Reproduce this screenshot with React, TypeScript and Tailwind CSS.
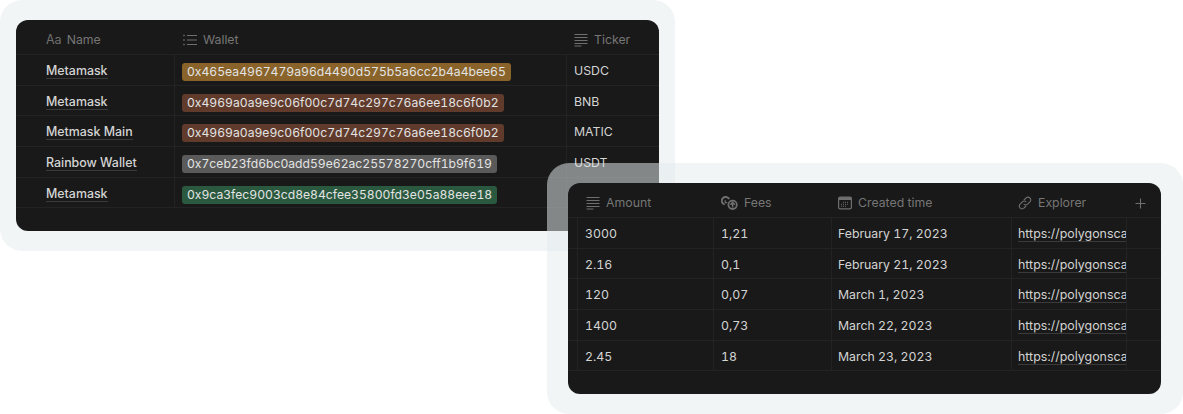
import { ReactNode } from "react";

function ListIcon() {
  return (
    <svg width="14" height="14" viewBox="0 0 14 14" fill="none" stroke="currentColor" strokeWidth="1.1">
      <path d="M4 2.5h10M4 7h10M4 11.5h10" />
      <path d="M0.3 2.5h1.4M0.3 7h1.4M0.3 11.5h1.4" strokeWidth="1.3" />
    </svg>
  );
}

function TextIcon() {
  return (
    <svg width="14" height="14" viewBox="0 0 14 14" fill="none" stroke="currentColor" strokeWidth="1.1">
      <path d="M0.5 1.5h13M0.5 4.5h13M0.5 7.5h13M0.5 10.5h13M0.5 13h7" />
    </svg>
  );
}

function FeesIcon() {
  return (
    <svg width="17" height="14" viewBox="0 0 17 14" fill="none" stroke="currentColor">
      <path d="M8.2 3.2A3.9 3.9 0 1 0 3.6 8.6" strokeWidth="2" />
      <path d="M4.2 4.2v2.4h2" strokeWidth="1.2" />
      <circle cx="11.6" cy="8.8" r="4.2" strokeWidth="1.8" />
      <path d="M11.6 11.6V6.6M9.4 8.8l2.2-2.4 2.2 2.4" strokeWidth="1.5" />
    </svg>
  );
}

function CalendarIcon() {
  return (
    <svg width="14" height="14" viewBox="0 0 14 14" fill="none">
      <rect x="0.6" y="1.2" width="12.8" height="11.6" rx="1.6" stroke="currentColor" strokeWidth="1.2" />
      <rect x="0.6" y="1.2" width="12.8" height="2.8" fill="currentColor" />
      <path d="M5 6.2h6M3 8.2h8M3 10.2h5" stroke="currentColor" strokeWidth="1.1" strokeDasharray="1 1" />
    </svg>
  );
}

function LinkIcon() {
  return (
    <svg width="14" height="14" viewBox="0 0 14 14" fill="none" stroke="currentColor" strokeWidth="1.1">
      <path d="M5.8 4.2 8 2a2.6 2.6 0 0 1 3.9 0 2.6 2.6 0 0 1 0 3.8L9.6 8.1a2.6 2.6 0 0 1-3.8 0" />
      <path d="M8.2 9.8 6 12a2.6 2.6 0 0 1-3.9 0 2.6 2.6 0 0 1 0-3.8l2.3-2.3a2.6 2.6 0 0 1 3.8 0" />
    </svg>
  );
}

function HeaderCell({ icon, label }: { icon: ReactNode; label: string }) {
  return (
    <div className="flex items-center gap-[6px] text-[#6f6f6f]">
      {icon}
      <span className="text-[12.3px] text-[#767676]">{label}</span>
    </div>
  );
}

function Linked({ children, medium }: { children: ReactNode; medium?: boolean }) {
  return (
    <span
      className={`border-b border-[#3a3a3a] leading-[15px] text-[#d4d4d4] normal-nums ${
        medium ? "text-[12.4px] font-medium" : "text-[12.4px]"
      }`}
    >
      {children}
    </span>
  );
}

const wallets = [
  { name: "Metamask", address: "0x465ea4967479a96d4490d575b5a6cc2b4a4bee65", color: "bg-[#89632a]", ticker: "USDC" },
  { name: "Metamask", address: "0x4969a0a9e9c06f00c7d74c297c76a6ee18c6f0b2", color: "bg-[#603b2c]", ticker: "BNB" },
  { name: "Metmask Main", address: "0x4969a0a9e9c06f00c7d74c297c76a6ee18c6f0b2", color: "bg-[#603b2c]", ticker: "MATIC" },
  { name: "Rainbow Wallet", address: "0x7ceb23fd6bc0add59e62ac25578270cff1b9f619", color: "bg-[#5a5a5a]", ticker: "USDT" },
  { name: "Metamask", address: "0x9ca3fec9003cd8e84cfee35800fd3e05a88eee18", color: "bg-[#2b593f]", ticker: "" },
];

const payments = [
  { amount: "3000", fees: "1,21", created: "February 17, 2023" },
  { amount: "2.16", fees: "0,1", created: "February 21, 2023" },
  { amount: "120", fees: "0,07", created: "March 1, 2023" },
  { amount: "1400", fees: "0,73", created: "March 22, 2023" },
  { amount: "2.45", fees: "18", created: "March 23, 2023" },
];

function WalletTable() {
  return (
    <div className="h-[211px] w-[643px] rounded-xl bg-[#191919] text-[12.3px] text-[#d4d4d4] tabular-nums">
      <div className="grid h-[35px] grid-cols-[159px_392px_92px] items-center border-b border-[#232323] pt-[6px]">
        <div className="flex items-center gap-[5px] pl-[30px] text-[#6f6f6f]">
          <span className="text-[12.5px]">Aa</span>
          <span className="text-[12.3px] text-[#767676]">Name</span>
        </div>
        <div className="pl-[8px]">
          <HeaderCell icon={<ListIcon />} label="Wallet" />
        </div>
        <div className="pl-[7px]">
          <HeaderCell icon={<TextIcon />} label="Ticker" />
        </div>
      </div>
      {wallets.map((w) => (
        <div key={w.address + w.ticker} className="grid h-[30.7px] grid-cols-[159px_392px_92px] border-b border-[#232323]">
          <div className="border-r border-[#232323] pt-[7px] pl-[30px]">
            <Linked medium>{w.name}</Linked>
          </div>
          <div className="border-r border-[#232323] pt-[8px] pl-[7px]">
            <span className={`${w.color} inline-block h-[18px] rounded-[3px] px-[5px] text-[12.15px] leading-[18px] text-[#e3e3e3]`}>
              {w.address}
            </span>
          </div>
          <div className="pt-[7px] pl-[7px]">{w.ticker}</div>
        </div>
      ))}
    </div>
  );
}

function PaymentTable() {
  return (
    <div className="h-[211px] w-[593px] rounded-xl bg-[#191919] text-[12.3px] text-[#d4d4d4] tabular-nums">
      <div className="grid h-[35px] grid-cols-[146px_118px_180px_115px_34px] items-center border-b border-[#232323] pt-[6px]">
        <div className="pl-[18px]">
          <HeaderCell icon={<TextIcon />} label="Amount" />
        </div>
        <div className="pl-[7px]">
          <HeaderCell icon={<FeesIcon />} label="Fees" />
        </div>
        <div className="pl-[6px]">
          <HeaderCell icon={<CalendarIcon />} label="Created time" />
        </div>
        <div className="pl-[6px]">
          <HeaderCell icon={<LinkIcon />} label="Explorer" />
        </div>
        <svg className="ml-[8px] text-[#6f6f6f]" width="11" height="11" viewBox="0 0 11 11" stroke="currentColor" strokeWidth="1.1">
          <path d="M5.5 0.5v10M0.5 5.5h10" />
        </svg>
      </div>
      {payments.map((p) => (
        <div key={p.created} className="grid h-[30.7px] grid-cols-[10px_136px_118px_180px_115px_34px] border-b border-[#232323]">
          <div className="border-r border-[#232323]" />
          <div className="border-r border-[#232323] pt-[7px] pl-[7px]">{p.amount}</div>
          <div className="border-r border-[#232323] pt-[7px] pl-[7px]">{p.fees}</div>
          <div className="border-r border-[#232323] pt-[7px] pl-[6px]">{p.created}</div>
          <div className="overflow-hidden border-r border-[#232323] pt-[7px] pl-[6px] whitespace-nowrap">
            <Linked>https://polygonsca</Linked>
          </div>
          <div />
        </div>
      ))}
    </div>
  );
}

export default function App() {
  return (
    <div className="h-[414px] w-[1183px] overflow-hidden bg-white font-['Inter',sans-serif]">
      <div className="h-[251px] w-[675px] rounded-[22px] bg-[#f1f5f6] pt-[20px] pl-[16px]">
        <WalletTable />
      </div>
      <div className="relative mt-[-88px] ml-[547px] h-[251px] w-[636px] rounded-[22px] bg-[#e4ecee]/[0.52] pt-[20px] pl-[21px]">
        <PaymentTable />
      </div>
    </div>
  );
}
